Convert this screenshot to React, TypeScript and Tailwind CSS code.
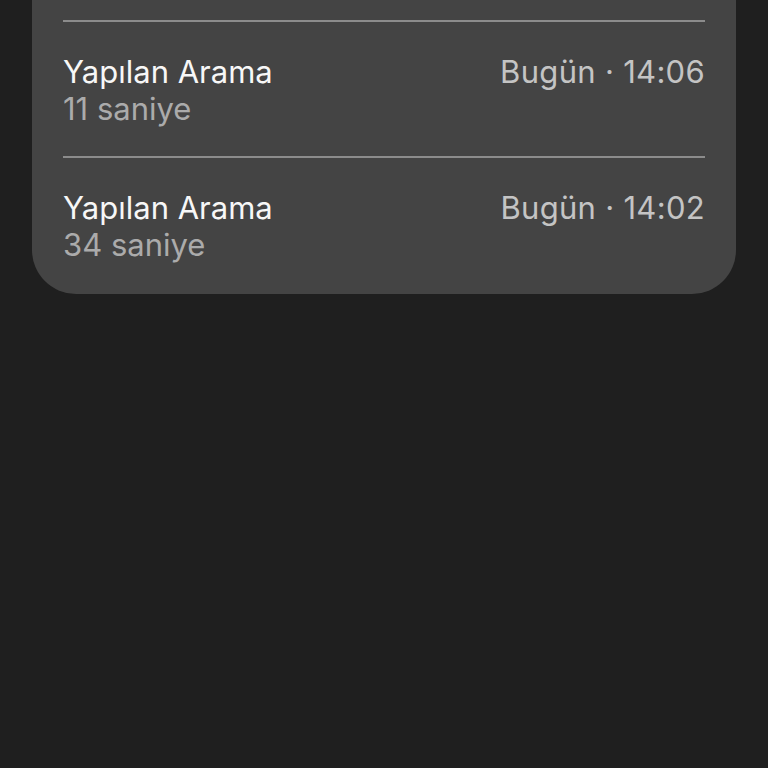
import React from 'react';

interface Call {
    title: string;
    duration: string;
    time: string;
}

const calls: Call[] = [
    { title: 'Yapılan Arama', duration: '11 saniye', time: 'Bugün · 14:06' },
    { title: 'Yapılan Arama', duration: '34 saniye', time: 'Bugün · 14:02' },
];

export default function App() {
    return (
        <div className="min-h-screen bg-[#1f1f1f] px-[32px]" style={{ fontFamily: 'Inter, "Noto Sans", sans-serif' }}>
            <div className="bg-[#444444] rounded-b-[44px] pt-[20px] pb-[2px] px-[31px]">
                {calls.map((call, i) => (
                    <div key={i}>
                        <div className="h-[2px] bg-[#8c8c8c]" />
                        <div className="flex justify-between pt-[32px] pb-[29px]">
                            <div className="flex flex-col">
                                <span className="text-[31px] leading-[36px] text-[#f7f7f7]">{call.title}</span>
                                <span className="text-[31px] leading-[37px] text-[#ababab]">{call.duration}</span>
                            </div>
                            <span className="text-[31px] leading-[36px] text-[#c4c4c4] tracking-[0.3px]">{call.time}</span>
                        </div>
                    </div>
                ))}
            </div>
        </div>
    );
}
